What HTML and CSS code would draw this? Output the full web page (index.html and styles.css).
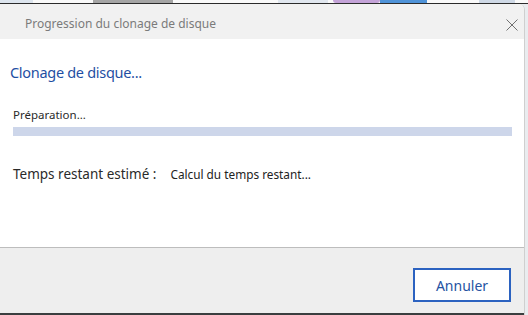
FILE: index.html
```html
<!DOCTYPE html>
<html lang="fr">
  <head>
    <meta charset="UTF-8" />
    <title>Progression du clonage de disque</title>
    <link rel="stylesheet" href="styles.css">
  </head>
  <body>
    <div class="desk">
      <span class="blk blk-a"></span>
      <span class="blk blk-b"></span>
      <span class="blk blk-c"></span>
      <span class="blk blk-d"></span>
      <span class="blk blk-e"></span>
      <span class="blk blk-f"></span>
    </div>

    <div class="window">
      <div class="titlebar">
        <span class="title">Progression du clonage de disque</span>
        <svg class="close" width="12" height="12" viewBox="0 0 12 12">
          <path d="M0.5 0.5 L11.5 11.5 M11.5 0.5 L0.5 11.5" stroke="#707070" stroke-width="1" fill="none" />
        </svg>
      </div>

      <div class="content">
        <h1 class="heading">Clonage de disque...</h1>
        <p class="step">Préparation...</p>
        <div class="progress"></div>
        <div class="remaining">
          <span class="remaining-label">Temps restant estimé :</span>
          <span class="remaining-value">Calcul du temps restant...</span>
        </div>
      </div>

      <div class="footer">
        <button class="button" type="button">Annuler</button>
      </div>
    </div>
  </body>
</html>
```

FILE: styles.css
```css
* {
  margin: 0;
  padding: 0;
  box-sizing: border-box;
}

body {
  width: 528px;
  height: 315px;
  overflow: hidden;
  background-color: #e9ecef;
  font-family: "Noto Sans", "Open Sans", sans-serif;
  color: #222;
}

/* strip of the desktop behind the dialog */
.desk {
  height: 4px;
  display: flex;
  background-color: #fafafa;
  border-bottom: 1px solid #2b2b2b;
}

.blk {
  display: block;
  height: 3px;
}

.blk-a {
  width: 33px;
  background-color: #dde5ee;
}

.blk-b {
  width: 80px;
  margin-left: 60px;
  background-color: #a5a5a5;
}

.blk-c {
  width: 50px;
  margin-left: 105px;
  background-color: #e1e7ef;
}

.blk-d {
  width: 47px;
  margin-left: 5px;
  background-color: #c4a3d8;
  border-radius: 0 0 20px 20px;
}

.blk-e {
  width: 47px;
  background-color: #4f93d8;
  border-left: 21px solid #4f93d8;
}

.blk-f {
  width: 36px;
  margin-left: 52px;
  background-color: #cfd9e6;
}

.window {
  width: 525px;
  height: 311px;
  display: flex;
  flex-direction: column;
  background-color: #fff;
  border-right: 1px solid #cfcfcf;
  border-top-right-radius: 6px;
  overflow: hidden;
}

.titlebar {
  height: 35px;
  flex-shrink: 0;
  display: flex;
  align-items: center;
  justify-content: space-between;
  padding: 4px 6px 0 25px;
  background-color: #f1f1f1;
}

.title {
  font-size: 12px;
  color: #7b7b7b;
}

.close {
  margin-top: 2px;
}

.content {
  flex: 1;
  padding: 22px 12px 0 10px;
}

.heading {
  font-size: 14.5px;
  letter-spacing: -0.3px;
  font-weight: normal;
  color: #1f4fa3;
  line-height: 22px;
}

.step {
  margin-top: 24px;
  padding-left: 3px;
  font-size: 11.5px;
  line-height: 16px;
  color: #2a2a2a;
}

.progress {
  margin: 4px 0 0 3px;
  height: 9px;
  background-color: #cdd6ea;
}

.remaining {
  margin-top: 29px;
  padding-left: 3px;
  display: flex;
  align-items: baseline;
  gap: 14px;
}

.remaining-label {
  font-size: 13.5px;
  color: #2a2a2a;
}

.remaining-value {
  font-size: 11.8px;
  color: #222;
}

.footer {
  height: 68px;
  flex-shrink: 0;
  display: flex;
  justify-content: flex-end;
  align-items: flex-start;
  padding: 20px 13px 0 0;
  background-color: #eeeeee;
  border-top: 1px solid #bdbdbd;
  border-bottom: 2px solid #3a3e3f;
}

.button {
  width: 98px;
  height: 34px;
  border: 2px solid #2b62c0;
  background-color: #fff;
  color: #2553a2;
  font-family: "Noto Sans", "Open Sans", sans-serif;
  font-size: 14px;
  cursor: pointer;
}
```
